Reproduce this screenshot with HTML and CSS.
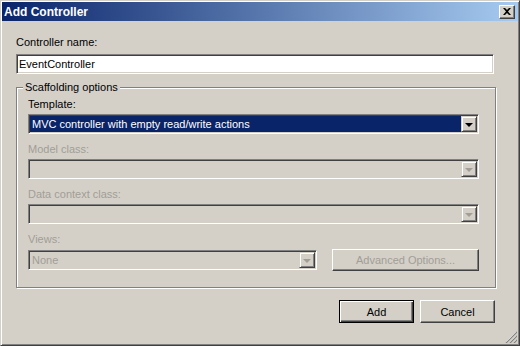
FILE: index.html
```html
<!DOCTYPE html>
<html lang="en">
<head>
    <meta charset="UTF-8">
    <title>Add Controller</title>
    <link rel="stylesheet" href="styles.css">
</head>
<body>
    <div class="window">
        <div class="titlebar">
            <span class="title">Add Controller</span>
            <span class="close-btn">
                <svg width="8" height="7" viewBox="0 0 8 7"><path d="M0 0h2l2 2 2-2h2L5 3.5 8 7H6L4 5 2 7H0l3-3.5z" fill="#000"/></svg>
            </span>
        </div>
        <div class="content">
            <div class="label">Controller name:</div>
            <div class="textbox">EventController</div>

            <fieldset class="group">
                <legend>Scaffolding options</legend>

                <div class="field">
                    <div class="label">Template:</div>
                    <div class="combo">
                        <div class="combo-text selected">MVC controller with empty read/write actions</div>
                        <div class="combo-btn"><span class="arrow"></span></div>
                    </div>
                </div>

                <div class="field">
                    <div class="label disabled">Model class:</div>
                    <div class="combo off">
                        <div class="combo-text"></div>
                        <div class="combo-btn"><span class="arrow"></span></div>
                    </div>
                </div>

                <div class="field">
                    <div class="label disabled">Data context class:</div>
                    <div class="combo off">
                        <div class="combo-text"></div>
                        <div class="combo-btn"><span class="arrow"></span></div>
                    </div>
                </div>

                <div class="field last">
                    <div class="label disabled">Views:</div>
                    <div class="views-row">
                        <div class="combo off views">
                            <div class="combo-text">None</div>
                            <div class="combo-btn"><span class="arrow"></span></div>
                        </div>
                        <div class="button advanced">Advanced Options...</div>
                    </div>
                </div>
            </fieldset>

            <div class="actions">
                <div class="button default">Add</div>
                <div class="button">Cancel</div>
            </div>
        </div>
        <svg class="grip" width="12" height="12" viewBox="0 0 12 12">
            <path d="M11 1L1 11M11 5L5 11M11 9L9 11" stroke="#fff" stroke-width="1"/>
            <path d="M12 1L1 12M12 5L5 12M12 9L9 12" stroke="#808080" stroke-width="1.2"/>
        </svg>
    </div>
</body>
</html>
```

FILE: styles.css
```css
body {
    margin: 0;
    font-family: "Liberation Sans", Arial, sans-serif;
    font-size: 11px;
    color: #000;
    background: #d4d0c8;
}
.window {
    position: relative;
    width: 520px;
    height: 346px;
    box-sizing: border-box;
    border: 1px solid;
    border-color: #d4d0c8 #404040 #404040 #d4d0c8;
    box-shadow: inset 1px 1px #fff, inset -1px -1px #808080;
    padding: 1px;
    background: #d4d0c8;
}
.titlebar {
    height: 19px;
    display: flex;
    align-items: center;
    justify-content: space-between;
    padding: 0 3px 0 2px;
    background: linear-gradient(to right, #0a246a, #a6caf0);
}
.title {
    color: #fff;
    font-weight: bold;
    font-size: 12px;
}
.close-btn {
    width: 16px;
    height: 14px;
    box-sizing: border-box;
    display: flex;
    align-items: center;
    justify-content: center;
    background: #d4d0c8;
    border: 1px solid;
    border-color: #fff #404040 #404040 #fff;
    box-shadow: inset -1px -1px #808080;
}
.content {
    padding: 15px 24px 0 14px;
}
.label {
    line-height: 13px;
    margin-bottom: 5px;
}
.label.disabled { color: #a19e96; }
.textbox {
    height: 20px;
    box-sizing: border-box;
    line-height: 16px;
    padding: 1px 2px;
    background: #fff;
    border: 1px solid;
    border-color: #808080 #fff #fff #808080;
    box-shadow: inset 1px 1px #404040, inset -1px -1px #d4d0c8;
}
.group {
    margin: 7px 0 0;
    padding: 4px 16px 16px 11px;
    border: 1px solid #808080;
    box-shadow: inset 1px 1px #fff, 1px 1px #fff;
}
.group legend {
    margin-left: -5px;
    padding: 0 2px;
    line-height: 13px;
    background: #d4d0c8;
}
.field { margin-bottom: 9px; }
.field.last { margin-bottom: 0; }
.field .label { margin-bottom: 3px; }
.combo {
    height: 20px;
    box-sizing: border-box;
    display: flex;
    padding: 1px;
    background: #fff;
    border: 1px solid;
    border-color: #808080 #fff #fff #808080;
    box-shadow: inset 1px 1px #404040, inset -1px -1px #d4d0c8;
}
.combo.off { background: #d4d0c8; }
.combo-text {
    flex: 1;
    line-height: 16px;
    padding-left: 2px;
}
.combo-text.selected {
    background: #0a246a;
    color: #fff;
}
.combo.off .combo-text { color: #a19e96; }
.combo-btn {
    width: 16px;
    height: 16px;
    box-sizing: border-box;
    display: flex;
    align-items: center;
    justify-content: center;
    background: #d4d0c8;
    border: 1px solid;
    border-color: #d4d0c8 #404040 #404040 #d4d0c8;
    box-shadow: inset 1px 1px #fff, inset -1px -1px #808080;
}
.arrow {
    width: 0;
    height: 0;
    border-left: 4px solid transparent;
    border-right: 4px solid transparent;
    border-top: 4px solid #000;
    margin-top: 1px;
}
.combo.off .arrow { border-top-color: #a19e96; }
.views-row {
    display: flex;
    align-items: center;
    gap: 15px;
}
.combo.views { width: 289px; }
.button {
    width: 75px;
    height: 23px;
    box-sizing: border-box;
    display: flex;
    align-items: center;
    justify-content: center;
    border: 1px solid;
    border-color: #fff #404040 #404040 #fff;
    box-shadow: inset -1px -1px #808080;
}
.button.default {
    border-color: #000;
    box-shadow: inset 1px 1px #fff, inset -1px -1px #404040, inset -2px -2px #808080;
}
.button.advanced {
    width: 147px;
    height: 22px;
    color: #a19e96;
}
.actions {
    display: flex;
    justify-content: flex-end;
    gap: 6px;
    margin: 12px -1px 0 0;
}
.grip {
    position: absolute;
    right: 2px;
    bottom: 2px;
}
```
